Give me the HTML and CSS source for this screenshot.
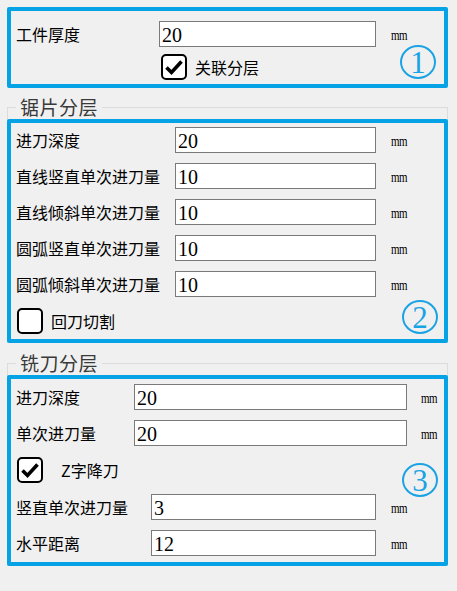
FILE: index.html
```html
<!DOCTYPE html>
<html lang="zh-CN">
<head>
<meta charset="utf-8">
<title>分层设置</title>
<link rel="stylesheet" href="styles.css">
</head>
<body>
<div class="page">
  <section class="panel panel-1">
    <div class="row">
      <span class="label lw-143">工件厚度</span>
      <input class="field fw-217" value="20">
      <span class="unit">mm</span>
    </div>
    <label class="check check-top">
      <svg class="box" width="26" height="26" viewBox="0 0 26 26"><rect x="1" y="1" width="24" height="24" rx="4" fill="#fff" stroke="#000" stroke-width="2"/><path d="M5.5 13.5 L10.5 18.5 L20.5 7.5" fill="none" stroke="#000" stroke-width="3.6"/></svg>
      <span class="check-text gap-8">关联分层</span>
    </label>
    <span class="badge badge-1">1</span>
  </section>

  <fieldset class="group">
    <legend>锯片分层</legend>
    <div class="panel panel-2">
      <div class="row">
        <span class="label lw-159">进刀深度</span>
        <input class="field fw-201" value="20">
        <span class="unit">mm</span>
      </div>
      <div class="row">
        <span class="label lw-159">直线竖直单次进刀量</span>
        <input class="field fw-201" value="10">
        <span class="unit">mm</span>
      </div>
      <div class="row">
        <span class="label lw-159">直线倾斜单次进刀量</span>
        <input class="field fw-201" value="10">
        <span class="unit">mm</span>
      </div>
      <div class="row">
        <span class="label lw-159">圆弧竖直单次进刀量</span>
        <input class="field fw-201" value="10">
        <span class="unit">mm</span>
      </div>
      <div class="row">
        <span class="label lw-159">圆弧倾斜单次进刀量</span>
        <input class="field fw-201" value="10">
        <span class="unit">mm</span>
      </div>
      <label class="check check-left">
        <svg class="box" width="26" height="26" viewBox="0 0 26 26"><rect x="1" y="1" width="24" height="24" rx="4" fill="#fff" stroke="#000" stroke-width="2"/></svg>
        <span class="check-text gap-8">回刀切割</span>
      </label>
      <span class="badge badge-2">2</span>
    </div>
  </fieldset>

  <fieldset class="group">
    <legend>铣刀分层</legend>
    <div class="panel panel-3">
      <div class="row">
        <span class="label lw-118">进刀深度</span>
        <input class="field fw-273" value="20">
        <span class="unit unit-14">mm</span>
      </div>
      <div class="row">
        <span class="label lw-118">单次进刀量</span>
        <input class="field fw-273" value="20">
        <span class="unit unit-14">mm</span>
      </div>
      <label class="check check-left">
        <svg class="box" width="26" height="26" viewBox="0 0 26 26"><rect x="1" y="1" width="24" height="24" rx="4" fill="#fff" stroke="#000" stroke-width="2"/><path d="M5.5 13.5 L10.5 18.5 L20.5 7.5" fill="none" stroke="#000" stroke-width="3.6"/></svg>
        <span class="check-text gap-18">Z字降刀</span>
      </label>
      <div class="row">
        <span class="label lw-135">竖直单次进刀量</span>
        <input class="field fw-225" value="3">
        <span class="unit">mm</span>
      </div>
      <div class="row">
        <span class="label lw-135">水平距离</span>
        <input class="field fw-225" value="12">
        <span class="unit">mm</span>
      </div>
      <span class="badge badge-3">3</span>
    </div>
  </fieldset>
</div>
</body>
</html>
```

FILE: styles.css
```css
* { box-sizing: border-box; }

html, body {
  margin: 0;
  background: #f0f0f0;
}

body {
  font-family: "Noto Sans CJK SC", "Noto Sans", sans-serif;
  color: #000;
}

.page {
  width: 441px;
  margin: 7px 0 0 7px;
}

.panel {
  position: relative;
  border: 4px solid #05a3e6;
  border-radius: 2px;
  display: flex;
  flex-direction: column;
  gap: 10px;
}

.panel-1 {
  padding: 10px 0 4px 5px;
  gap: 7px;
}

.panel-2 {
  padding: 4px 0 4px 5px;
  margin: 0 -1px;
}

.panel-3 {
  padding: 5px 0 6px 5px;
  margin: 0 -1px;
}

.row {
  display: flex;
  align-items: center;
  height: 26px;
}

.label {
  font-size: 16px;
  line-height: 20px;
  white-space: nowrap;
}

.lw-143 { width: 143px; }
.lw-159 { width: 159px; }
.lw-118 { width: 118px; }
.lw-135 { width: 135px; }

.field {
  height: 26px;
  border: 1px solid #7a7a7a;
  background: #fff;
  padding: 2px 0 0 2px;
  margin: 0;
  font-family: "Liberation Serif", serif;
  font-size: 20px;
  color: #000;
  outline: none;
  border-radius: 0;
}

.fw-217 { width: 217px; }
.fw-201 { width: 201px; }
.fw-273 { width: 273px; }
.fw-225 { width: 225px; }

.unit {
  display: inline-block;
  margin-left: 15px;
  margin-top: 4px;
  font-family: "Liberation Serif", serif;
  font-size: 14px;
  line-height: 14px;
  letter-spacing: -0.5px;
  transform: scaleX(0.78);
  transform-origin: left center;
}

.unit-14 { margin-left: 14px; }

.check {
  display: flex;
  align-items: center;
  height: 26px;
}

.check-top { margin-left: 145px; }
.check-left { margin-left: 1px; margin-top: 1px; margin-bottom: 1px; }

.box { display: block; flex: none; }

.check-text {
  font-size: 16px;
  line-height: 20px;
}

.gap-8 { margin-left: 8px; }
.gap-18 { margin-left: 18px; }

.badge {
  position: absolute;
  width: 36px;
  height: 34px;
  border: 2px solid #1aa3e4;
  border-radius: 50%;
  display: flex;
  align-items: center;
  justify-content: center;
  font-family: "Liberation Serif", serif;
  font-size: 31px;
  line-height: 31px;
  color: #1aa3e4;
}

.badge-1 { top: 34px; right: 8px; }
.badge-2 { top: 177px; right: 6px; }
.badge-3 { top: 84px; right: 6px; }

.group {
  margin: 8px 0 0;
  padding: 1px 0 0;
  border: 1px solid #dcdcdc;
  border-bottom: none;
  min-width: 0;
}

.group + .group { margin-top: 9px; }

.group legend {
  margin-left: 8px;
  padding: 0 4px;
  font-size: 19px;
  line-height: 22px;
  color: #3a3a3a;
  letter-spacing: 0.5px;
}
```
